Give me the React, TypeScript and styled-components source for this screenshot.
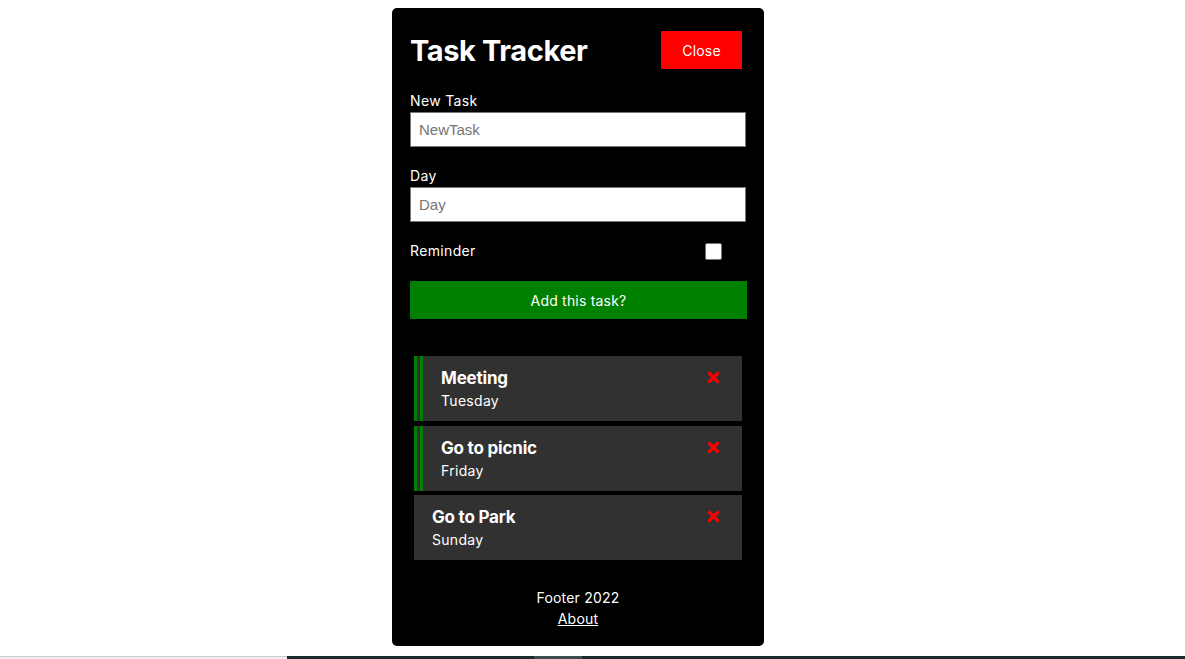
import React, { useState } from "react";
import styled, { createGlobalStyle } from "styled-components";
import { FaTimes } from "react-icons/fa";

const Global = createGlobalStyle`
  html, body { margin: 0; padding: 0; background: #fff; }
  body { font-family: "Inter", "Open Sans", sans-serif; }
  * { box-sizing: border-box; }
`;

const Page = styled.div`
  padding: 8px 29px 0 0;
`;

const Card = styled.div`
  width: 372px;
  margin: 0 auto;
  background: #000;
  color: #fff;
  border-radius: 5px;
  padding: 23px 18px 0 18px;
  height: 638px;
  display: flex;
  flex-direction: column;
`;

const Header = styled.header`
  display: flex;
  align-items: center;
  justify-content: space-between;
  padding-right: 4px;
  height: 38px;
`;

const Title = styled.h1`
  margin: 0;
  font-size: 29px;
  font-weight: 700;
  letter-spacing: -0.4px;
`;

const Button = styled.button<{ $bg: string; $full?: boolean }>`
  border: none;
  background: ${(p) => p.$bg};
  color: #fff;
  font-family: "Inter", sans-serif;
  font-size: 14px;
  letter-spacing: 0.2px;
  height: 38px;
  width: ${(p) => (p.$full ? "calc(100% + 1px)" : "81px")};
  cursor: pointer;
`;

const Form = styled.form`
  display: flex;
  flex-direction: column;
  margin-top: 21px;
`;

const Field = styled.div<{ $top?: number }>`
  display: flex;
  flex-direction: column;
  margin-top: ${(p) => p.$top ?? 0}px;
`;

const Label = styled.label`
  font-size: 14px;
  line-height: 22px;
  letter-spacing: 0.35px;
`;

const Input = styled.input`
  height: 35px;
  width: 100%;
  border: 1px solid #767676;
  padding: 0 8px;
  font-family: "Liberation Sans", Arial, sans-serif;
  font-size: 15px;
  outline: none;
  &::placeholder { color: #757575; }
`;

const CheckRow = styled.div`
  display: flex;
  align-items: center;
  justify-content: space-between;
  margin-top: 18px;
  height: 22px;
  padding-right: 24px;
`;

const Check = styled.input`
  appearance: none;
  width: 17px;
  height: 17px;
  margin: 0;
  background: #fff;
  border: 1px solid #767676;
  border-radius: 2px;
`;

const AddWrap = styled.div`
  margin-top: 19px;
`;

const List = styled.div`
  display: flex;
  flex-direction: column;
  gap: 4.5px;
  margin: 37px 4px 0 4px;
`;

const Task = styled.div<{ $reminder: boolean }>`
  background: #313131;
  height: 65px;
  padding: 10px 20px 0 18px;
  border-left: ${(p) => (p.$reminder ? "9px double #008000" : "none")};
  display: flex;
  justify-content: space-between;
`;

const TaskText = styled.div`
  display: flex;
  flex-direction: column;
`;

const TaskTitle = styled.h3`
  margin: 0;
  font-size: 17px;
  line-height: 24px;
  font-weight: 700;
  letter-spacing: -0.2px;
`;

const TaskDay = styled.p`
  margin: 0;
  font-size: 14px;
  line-height: 21px;
  letter-spacing: 0.3px;
`;

const Delete = styled.span`
  color: #ff0000;
  display: flex;
  padding-top: 3px;
`;

const Footer = styled.footer`
  margin-top: 27px;
  text-align: center;
  font-size: 14px;
  line-height: 21px;
  letter-spacing: 0.2px;
`;

const Link = styled.a`
  color: #fff;
  text-decoration: underline;
`;

const Strip = styled.div`
  margin-top: 10px;
  height: 3px;
  display: grid;
  grid-template-columns: 287px 247px 48px 1fr;
`;

const StripPart = styled.div<{ $c: string; $top?: string }>`
  background: ${(p) => p.$c};
  border-top: ${(p) => (p.$top ? `1px solid ${p.$top}` : "none")};
`;

const tasks = [
  { id: 1, text: "Meeting", day: "Tuesday", reminder: true },
  { id: 2, text: "Go to picnic", day: "Friday", reminder: true },
  { id: 3, text: "Go to Park", day: "Sunday", reminder: false },
];

export default function App() {
  const [items] = useState(tasks);
  return (
    <>
      <Global />
      <Page>
        <Card>
          <Header>
            <Title>Task Tracker</Title>
            <Button $bg="#ff0000">Close</Button>
          </Header>
          <Form onSubmit={(e) => e.preventDefault()}>
            <Field>
              <Label>New Task</Label>
              <Input placeholder="NewTask" />
            </Field>
            <Field $top={18}>
              <Label>Day</Label>
              <Input placeholder="Day" />
            </Field>
            <CheckRow>
              <Label>Reminder</Label>
              <Check type="checkbox" />
            </CheckRow>
            <AddWrap>
              <Button $bg="#008000" $full type="submit">Add this task?</Button>
            </AddWrap>
          </Form>
          <List>
            {items.map((t) => (
              <Task key={t.id} $reminder={t.reminder}>
                <TaskText>
                  <TaskTitle>{t.text}</TaskTitle>
                  <TaskDay>{t.day}</TaskDay>
                </TaskText>
                <Delete>
                  <FaTimes size={17} />
                </Delete>
              </Task>
            ))}
          </List>
          <Footer>
            <div>Footer 2022</div>
            <Link href="#">About</Link>
          </Footer>
        </Card>
      </Page>
      <Strip>
        <StripPart $c="#f0f0f0" $top="#cccccc" />
        <StripPart $c="#1c2a2e" />
        <StripPart $c="#3f4d50" />
        <StripPart $c="#1c2a2e" />
      </Strip>
    </>
  );
}
